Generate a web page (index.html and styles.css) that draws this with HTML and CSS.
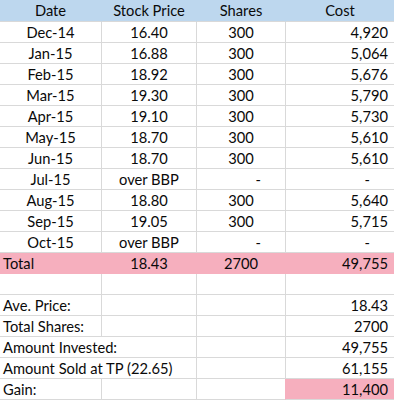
FILE: index.html
```html
<!DOCTYPE html>
<html>
<head>
<meta charset="utf-8">
<link rel="stylesheet" href="styles.css">
</head>
<body>
<table class="sheet">
  <colgroup>
    <col class="col-a"><col class="col-b"><col class="col-c"><col class="col-d">
  </colgroup>
  <thead>
    <tr class="head">
      <th>Date</th><th>Stock Price</th><th>Shares</th><th>Cost</th>
    </tr>
  </thead>
  <tbody>
    <tr><td class="c">Dec-14</td><td class="c">16.40</td><td class="c">300</td><td class="r">4,920</td></tr>
    <tr><td class="c">Jan-15</td><td class="c">16.88</td><td class="c">300</td><td class="r">5,064</td></tr>
    <tr><td class="c">Feb-15</td><td class="c">18.92</td><td class="c">300</td><td class="r">5,676</td></tr>
    <tr><td class="c">Mar-15</td><td class="c">19.30</td><td class="c">300</td><td class="r">5,790</td></tr>
    <tr><td class="c">Apr-15</td><td class="c">19.10</td><td class="c">300</td><td class="r">5,730</td></tr>
    <tr><td class="c">May-15</td><td class="c">18.70</td><td class="c">300</td><td class="r">5,610</td></tr>
    <tr><td class="c">Jun-15</td><td class="c">18.70</td><td class="c">300</td><td class="r">5,610</td></tr>
    <tr><td class="c">Jul-15</td><td class="c">over BBP</td><td class="dash">-</td><td class="dash">-</td></tr>
    <tr><td class="c">Aug-15</td><td class="c">18.80</td><td class="c">300</td><td class="r">5,640</td></tr>
    <tr><td class="c">Sep-15</td><td class="c">19.05</td><td class="c">300</td><td class="r">5,715</td></tr>
    <tr><td class="c">Oct-15</td><td class="c">over BBP</td><td class="dash">-</td><td class="dash">-</td></tr>
    <tr class="total"><td class="l">Total</td><td class="c">18.43</td><td class="c">2700</td><td class="r">49,755</td></tr>
    <tr><td></td><td></td><td></td><td></td></tr>
    <tr><td class="l">Ave. Price:</td><td></td><td></td><td class="r">18.43</td></tr>
    <tr><td class="l">Total Shares:</td><td></td><td></td><td class="r">2700</td></tr>
    <tr><td class="l" colspan="2">Amount Invested:</td><td></td><td class="r">49,755</td></tr>
    <tr><td class="l" colspan="2">Amount Sold at TP (22.65)</td><td></td><td class="r">61,155</td></tr>
    <tr><td class="l">Gain:</td><td></td><td class="before-hl"></td><td class="r hl">11,400</td></tr>
  </tbody>
</table>
</body>
</html>
```
FILE: styles.css
```css
html, body {
  margin: 0;
  padding: 0;
  background: #ffffff;
  overflow: hidden;
}

.sheet {
  border-collapse: separate;
  border-spacing: 0;
  table-layout: fixed;
  width: 394px;
  font-family: Lato, "Liberation Sans", sans-serif;
  font-size: 14.7px;
  color: #0a0a0a;
}

.col-a { width: 102px; }
.col-b { width: 95px; }
.col-c { width: 89px; }
.col-d { width: 108px; }

.sheet th,
.sheet td {
  box-sizing: border-box;
  height: 21px;
  padding: 0 3px;
  border-right: 1px solid #d9d9d9;
  border-bottom: 1px solid #d9d9d9;
  white-space: nowrap;
  overflow: visible;
  line-height: 20px;
  vertical-align: middle;
}

.sheet th:last-child,
.sheet td:last-child {
  border-right: none;
}

.head th {
  height: 22px;
  line-height: 21px;
  font-weight: normal;
  text-align: center;
  background: #bdd7ee;
  border-right-color: #bdd7ee;
}

.c { text-align: center; }
.l { text-align: left; }
.r { text-align: right; padding-right: 6px !important; }
.dash { text-align: right; padding-right: 24px !important; }

.total td {
  background: #f6afbe;
  border-right-color: #f6afbe;
  border-bottom-color: #f6afbe;
}

.before-hl { border-right-color: #f6afbe !important; }
.hl { background: #f6afbe; }
```
